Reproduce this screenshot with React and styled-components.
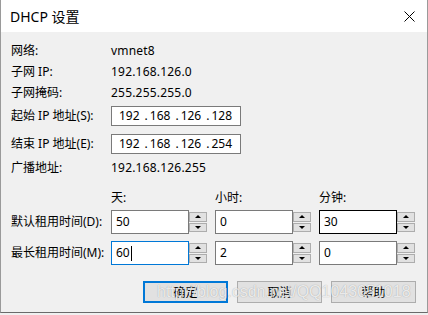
import styled, { createGlobalStyle } from 'styled-components';

const FONT = `"Noto Sans", "Noto Sans CJK SC", sans-serif`;

const Global = createGlobalStyle`
  html, body {
    margin: 0;
    padding: 0;
    background: #f0f0f0;
  }
  * { box-sizing: border-box; }
`;

const info = [
  { label: '网络:', value: 'vmnet8', h: 21 },
  { label: '子网 IP:', value: '192.168.126.0', h: 21 },
  { label: '子网掩码:', value: '255.255.255.0', h: 22 },
  { label: '起始 IP 地址(S):', ip: ['192', '168', '126', '128'], h: 24 },
  { label: '结束 IP 地址(E):', ip: ['192', '168', '126', '254'], h: 31 },
  { label: '广播地址:', value: '192.168.126.255', h: 18 },
];

const leases = [
  { label: '默认租用时间(D):', values: [{ v: '50' }, { v: '0' }, { v: '30', state: 'hover' }] },
  { label: '最长租用时间(M):', values: [{ v: '60', state: 'focus' }, { v: '2' }, { v: '0' }] },
];

const SpinBox = ({ value, state }) => (
  <S.Spin>
    <S.Edit $state={state}>
      {value}
      {state === 'focus' && <S.Caret />}
    </S.Edit>
    <S.Arrows>
      <S.ArrowBtn><S.Up /></S.ArrowBtn>
      <S.ArrowBtn><S.Down /></S.ArrowBtn>
    </S.Arrows>
  </S.Spin>
);

const App = () => {
  return (
    <S.Window>
      <Global />
      <S.TitleBar>
        <S.Title>DHCP 设置</S.Title>
        <svg width="11" height="11" viewBox="0 0 11 11">
          <path d="M0.5 0.5 L10.5 10.5 M10.5 0.5 L0.5 10.5" stroke="#000" strokeWidth="1" />
        </svg>
      </S.TitleBar>
      <S.Body>
        <S.InfoGrid>
          {info.map((row) => (
            <S.Row key={row.label} $h={row.h}>
              <S.Label>{row.label}</S.Label>
              {row.ip ? (
                <S.IpBox>
                  {row.ip.map((part, i) => (
                    <S.IpPart key={i}>
                      {part}
                      {i < 3 && <S.Dot>.</S.Dot>}
                    </S.IpPart>
                  ))}
                </S.IpBox>
              ) : (
                <S.Value>{row.value}</S.Value>
              )}
            </S.Row>
          ))}
        </S.InfoGrid>

        <S.LeaseGrid>
          <span />
          <S.Label>天:</S.Label>
          <S.Label>小时:</S.Label>
          <S.Label>分钟:</S.Label>
          {leases.map((row) => (
            <S.LeaseRow key={row.label}>
              <S.Label>{row.label}</S.Label>
              {row.values.map((item, i) => (
                <SpinBox key={i} value={item.v} state={item.state} />
              ))}
            </S.LeaseRow>
          ))}
        </S.LeaseGrid>

        <S.Buttons>
          <S.Button $primary>确定</S.Button>
          <S.Button>取消</S.Button>
          <S.Button>帮助</S.Button>
        </S.Buttons>
      </S.Body>
      <S.Watermark>http://blog.csdn.net/QQ1043051018</S.Watermark>
    </S.Window>
  );
};

const S = {
  Window: styled.div`
    position: relative;
    width: 428px;
    height: 313px;
    background: #f0f0f0;
    border-left: 1px solid #9a9a9a;
    border-right: 1px solid #9a9a9a;
    border-bottom: 1px solid #6a6a6a;
    font-family: ${FONT};
    font-size: 12px;
    color: #000;
    overflow: hidden;
  `,
  TitleBar: styled.div`
    height: 32px;
    background: #fff;
    display: flex;
    align-items: center;
    justify-content: space-between;
    padding: 0 12px 0 9px;
  `,
  Title: styled.div`
    font-size: 14px;
    color: #000;
  `,
  Body: styled.div`
    padding: 8px 11px 0 10px;
  `,
  InfoGrid: styled.div`
    display: flex;
    flex-direction: column;
  `,
  Row: styled.div`
    display: grid;
    grid-template-columns: 100px 130px;
    align-items: center;
    height: ${(p) => p.$h}px;
  `,
  Label: styled.span`
    white-space: nowrap;
    line-height: 16px;
  `,
  Value: styled.span`
    line-height: 16px;
    letter-spacing: 0.2px;
  `,
  IpBox: styled.div`
    height: 20px;
    width: 130px;
    background: #fff;
    border: 1px solid #7a7a7a;
    display: flex;
    align-items: center;
    padding-left: 7px;
    line-height: 16px;
  `,
  IpPart: styled.span`
    white-space: pre;
  `,
  Dot: styled.span`
    margin: 0 2px 0 5px;
  `,
  LeaseGrid: styled.div`
    display: grid;
    grid-template-columns: 92px 96px 96px 96px;
    grid-template-rows: 20px;
    column-gap: 8px;
    align-items: center;
    margin-top: 11px;
  `,
  LeaseRow: styled.div`
    display: contents;
    & > * { margin-top: 2px; }
    & + & > * { margin-top: 7px; }
  `,
  Spin: styled.div`
    display: flex;
    height: 24px;
  `,
  Edit: styled.div`
    width: 78px;
    height: 24px;
    background: #fff;
    border: 1px solid ${(p) => (p.$state === 'focus' ? '#0078d7' : p.$state === 'hover' ? '#000' : '#7a7a7a')};
    display: flex;
    align-items: center;
    padding-left: 4px;
    line-height: 16px;
  `,
  Caret: styled.span`
    width: 1px;
    height: 15px;
    background: #000;
    margin-left: 1px;
  `,
  Arrows: styled.div`
    width: 18px;
    margin: 2px 0 2px 0;
    display: flex;
    flex-direction: column;
    gap: 1px;
  `,
  ArrowBtn: styled.div`
    flex: 1;
    background: #e1e1e1;
    border: 1px solid #adadad;
    display: flex;
    align-items: center;
    justify-content: center;
  `,
  Up: styled.span`
    width: 0;
    height: 0;
    border-left: 3px solid transparent;
    border-right: 3px solid transparent;
    border-bottom: 3px solid #000;
  `,
  Down: styled.span`
    width: 0;
    height: 0;
    border-left: 3px solid transparent;
    border-right: 3px solid transparent;
    border-top: 3px solid #000;
  `,
  Buttons: styled.div`
    display: flex;
    justify-content: flex-end;
    gap: 9px;
    margin-top: 16px;
  `,
  Button: styled.button`
    width: 85px;
    height: 22px;
    padding: 0;
    font-family: ${FONT};
    font-size: 12px;
    color: #000;
    background: #e1e1e1;
    border: ${(p) => (p.$primary ? '2px solid #0078d7' : '1px solid #adadad')};
  `,
  Watermark: styled.div`
    position: absolute;
    left: 156px;
    top: 283px;
    font-family: "Liberation Sans", Arial, sans-serif;
    font-size: 16px;
    line-height: 18px;
    color: rgba(255, 255, 255, 0.8);
    text-shadow: 0 0 1px rgba(0, 0, 0, 0.35);
    white-space: nowrap;
    pointer-events: none;
  `,
};

export default App;
